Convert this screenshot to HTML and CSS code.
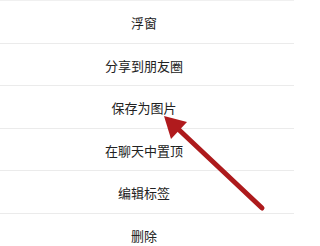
FILE: index.html
```html
<!DOCTYPE html>
<html lang="zh">
<head>
<meta charset="utf-8">
<title>菜单</title>
<link rel="stylesheet" href="styles.css">
</head>
<body>
<div class="page">
  <ul class="menu">
    <li class="item">浮窗</li>
    <li class="item">分享到朋友圈</li>
    <li class="item">保存为图片</li>
    <li class="item">在聊天中置顶</li>
    <li class="item">编辑标签</li>
    <li class="item">删除</li>
  </ul>
  <svg class="arrow" width="294" height="246" viewBox="0 0 294 246" aria-hidden="true">
    <line x1="262" y1="208" x2="176" y2="127" stroke="#ad1a1c" stroke-width="5" stroke-linecap="round"/>
    <polygon points="164,116 187,122 171,139" fill="#b01a1d"/>
  </svg>
</div>
</body>
</html>
```

FILE: styles.css
```css
html, body {
  margin: 0;
  padding: 0;
  background: #ffffff;
}

.page {
  position: relative;
  width: 294px;
  height: 246px;
  overflow: hidden;
  background: #ffffff;
}

.menu {
  list-style: none;
  margin: 0;
  padding: 0;
  border-top: 1px solid #f0f0f0;
}

.item {
  box-sizing: border-box;
  height: 42.5px;
  display: flex;
  align-items: center;
  justify-content: center;
  padding: 2px 6px 0 0;
  border-bottom: 1px solid #ebebeb;
  font-family: "Noto Sans CJK SC", "Noto Sans", sans-serif;
  font-size: 13px;
  color: #222222;
}

.item:last-child {
  border-bottom: none;
}

.arrow {
  position: absolute;
  left: 0;
  top: 0;
}
```
